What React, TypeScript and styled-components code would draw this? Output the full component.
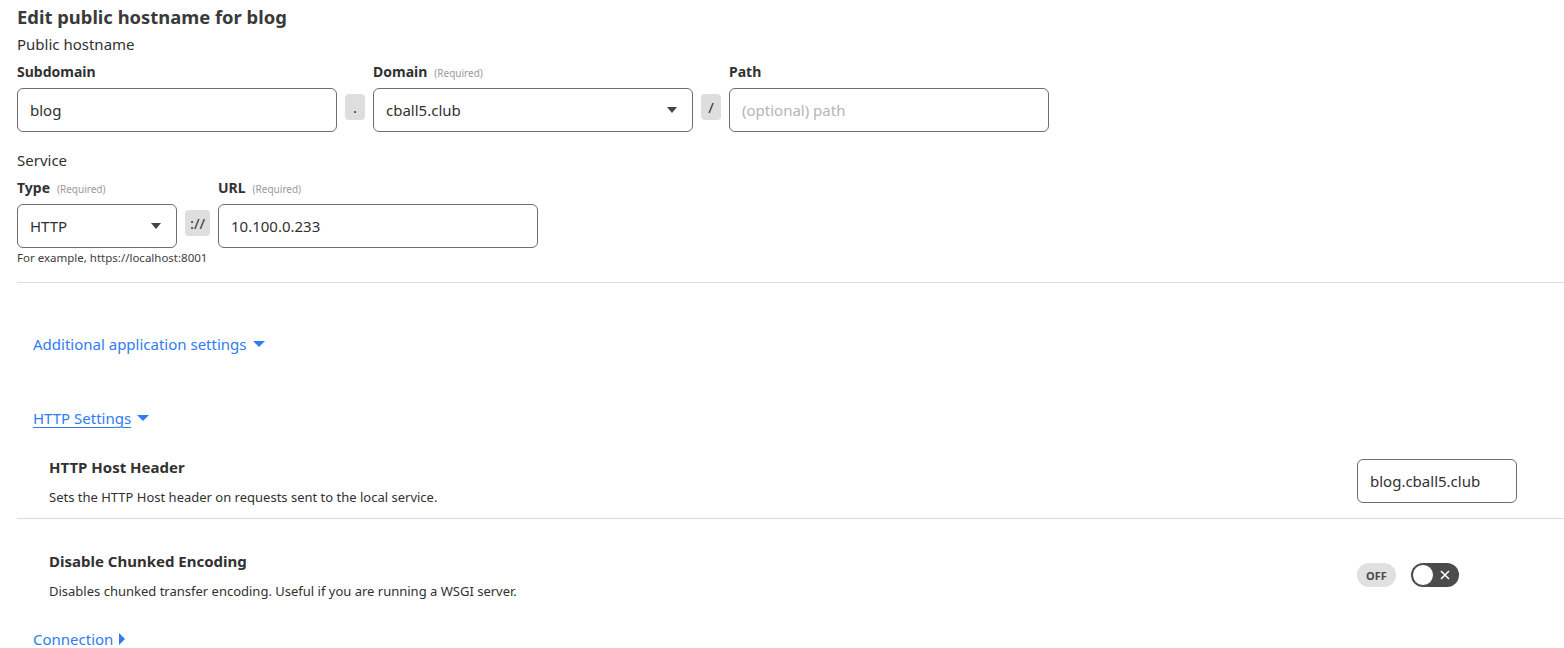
import { FC, ReactNode } from "react";
import styled, { createGlobalStyle } from "styled-components";

const Global = createGlobalStyle`
  body {
    margin: 0;
    background: #ffffff;
    font-family: "Noto Sans", "Open Sans", sans-serif;
    color: #313131;
  }
`;

const Page = styled.div`
  padding: 4px 0 0 17px;
`;

const Title = styled.h1`
  margin: 0;
  font-size: 18.4px;
  line-height: 26px;
  font-weight: 700;
  color: #3a3a3a;
`;

const Section = styled.div<{ $top: number }>`
  margin-top: ${(p) => p.$top}px;
  font-size: 15px;
  line-height: 20px;
`;

const FieldRow = styled.div`
  display: flex;
  align-items: flex-end;
  gap: 8px;
  margin-top: 8px;
`;

const Field = styled.div<{ $w: number }>`
  width: ${(p) => p.$w}px;
  display: flex;
  flex-direction: column;
`;

const Label = styled.div`
  display: flex;
  align-items: baseline;
  height: 20px;
  font-size: 14px;
  font-weight: 700;
  line-height: 20px;
  margin-bottom: 6px;
  color: #313131;
`;

const Req = styled.span`
  font-size: 10px;
  font-weight: 400;
  color: #9a9a9a;
  margin-left: 7px;
`;

const Box = styled.div<{ $muted?: boolean; $w?: number }>`
  box-sizing: border-box;
  ${(p) => (p.$w ? `width: ${p.$w}px;` : "")}
  height: 44px;
  border: 1px solid #6e6e6e;
  border-radius: 6px;
  display: flex;
  align-items: center;
  justify-content: space-between;
  padding: 0 12px;
  font-size: 15px;
  color: ${(p) => (p.$muted ? "#b5b5b5" : "#313131")};
`;

const Caret = styled.span`
  width: 0;
  height: 0;
  border-left: 5px solid transparent;
  border-right: 5px solid transparent;
  border-top: 6px solid #444;
  margin-right: 3px;
`;

const Sep = styled.div<{ $w?: number }>`
  width: ${(p) => p.$w ?? 20}px;
  height: 26px;
  margin-bottom: 12px;
  border-radius: 4px;
  background: #dedede;
  display: flex;
  align-items: center;
  justify-content: center;
  font-size: 15px;
  color: #313131;
`;

const Hint = styled.div`
  font-size: 11.5px;
  line-height: 16px;
  margin-top: 2px;
  color: #3d3d3d;
`;

const Divider = styled.hr<{ $top: number }>`
  margin: ${(p) => p.$top}px 0 0;
  border: none;
  border-top: 1px solid #dcdcdc;
`;

const Toggle = styled.div<{ $top: number; $underline?: boolean }>`
  margin: ${(p) => p.$top}px 0 0 16px;
  display: flex;
  align-items: center;
  gap: 6px;
  color: #2f7cf4;
  font-size: 15px;
  line-height: 22px;
  & > span:first-child {
    text-decoration: ${(p) => (p.$underline ? "underline" : "none")};
    text-underline-offset: 3px;
  }
`;

const DownArrow = styled.span`
  width: 0;
  height: 0;
  border-left: 6px solid transparent;
  border-right: 6px solid transparent;
  border-top: 6px solid #2f7cf4;
`;

const RightArrow = styled.span`
  width: 0;
  height: 0;
  border-top: 6px solid transparent;
  border-bottom: 6px solid transparent;
  border-left: 6px solid #2f7cf4;
`;

const SettingRow = styled.div<{ $top: number }>`
  display: flex;
  align-items: center;
  justify-content: space-between;
  padding: ${(p) => p.$top}px 47px 0 32px;
`;

const SettingText = styled.div`
  display: flex;
  flex-direction: column;
`;

const SettingTitle = styled.div`
  font-size: 15px;
  font-weight: 700;
  line-height: 22px;
  color: #313131;
`;

const SettingDesc = styled.div`
  font-size: 13px;
  line-height: 18px;
  margin-top: 10px;
  color: #313131;
`;

const Controls = styled.div`
  display: flex;
  align-items: center;
  gap: 15px;
  width: 160px;
`;

const OffPill = styled.div`
  width: 39px;
  height: 24px;
  border-radius: 12px;
  background: #e0e0e0;
  display: flex;
  align-items: center;
  justify-content: center;
  font-size: 11px;
  font-weight: 700;
  color: #4a4a4a;
`;

const Switch = styled.div`
  position: relative;
  box-sizing: border-box;
  width: 48px;
  height: 24px;
  border-radius: 12px;
  background: #4b4b4b;
  display: flex;
  align-items: center;
  justify-content: flex-end;
  padding-right: 9px;
`;

const Knob = styled.span`
  position: absolute;
  left: 1px;
  top: 1px;
  box-sizing: border-box;
  width: 22px;
  height: 22px;
  border-radius: 50%;
  background: #fff;
  border: 1px solid #4b4b4b;
`;

const ReqLabel: FC<{ children: ReactNode }> = ({ children }) => (
  <Label>
    {children}
    <Req>(Required)</Req>
  </Label>
);

export default function App() {
  return (
    <Page>
      <Global />
      <Title>Edit public hostname for blog</Title>
      <Section $top={4}>Public hostname</Section>
      <FieldRow>
        <Field $w={320}>
          <Label>Subdomain</Label>
          <Box>blog</Box>
        </Field>
        <Sep>.</Sep>
        <Field $w={320}>
          <ReqLabel>Domain</ReqLabel>
          <Box>
            cball5.club
            <Caret />
          </Box>
        </Field>
        <Sep>/</Sep>
        <Field $w={320}>
          <Label>Path</Label>
          <Box $muted>(optional) path</Box>
        </Field>
      </FieldRow>
      <Section $top={18}>Service</Section>
      <FieldRow>
        <Field $w={160}>
          <ReqLabel>Type</ReqLabel>
          <Box>
            HTTP
            <Caret />
          </Box>
        </Field>
        <Sep $w={25}>://</Sep>
        <Field $w={320}>
          <ReqLabel>URL</ReqLabel>
          <Box>10.100.0.233</Box>
        </Field>
      </FieldRow>
      <Hint>For example, https://localhost:8001</Hint>
      <Divider $top={16} />
      <Toggle $top={50}>
        <span>Additional application settings</span>
        <DownArrow />
      </Toggle>
      <Toggle $top={52} $underline>
        <span>HTTP Settings</span>
        <DownArrow />
      </Toggle>
      <SettingRow $top={27}>
        <SettingText>
          <SettingTitle>HTTP Host Header</SettingTitle>
          <SettingDesc>Sets the HTTP Host header on requests sent to the local service.</SettingDesc>
        </SettingText>
        <Box $w={160}>blog.cball5.club</Box>
      </SettingRow>
      <Divider $top={12} />
      <SettingRow $top={31}>
        <SettingText>
          <SettingTitle>Disable Chunked Encoding</SettingTitle>
          <SettingDesc>Disables chunked transfer encoding. Useful if you are running a WSGI server.</SettingDesc>
        </SettingText>
        <Controls>
          <OffPill>OFF</OffPill>
          <Switch>
            <Knob />
            <svg width="10" height="10" viewBox="0 0 10 10">
              <path d="M1 1 L9 9 M9 1 L1 9" stroke="#fff" strokeWidth="1.6" />
            </svg>
          </Switch>
        </Controls>
      </SettingRow>
      <Toggle $top={28}>
        <span>Connection</span>
        <RightArrow />
      </Toggle>
    </Page>
  );
}
